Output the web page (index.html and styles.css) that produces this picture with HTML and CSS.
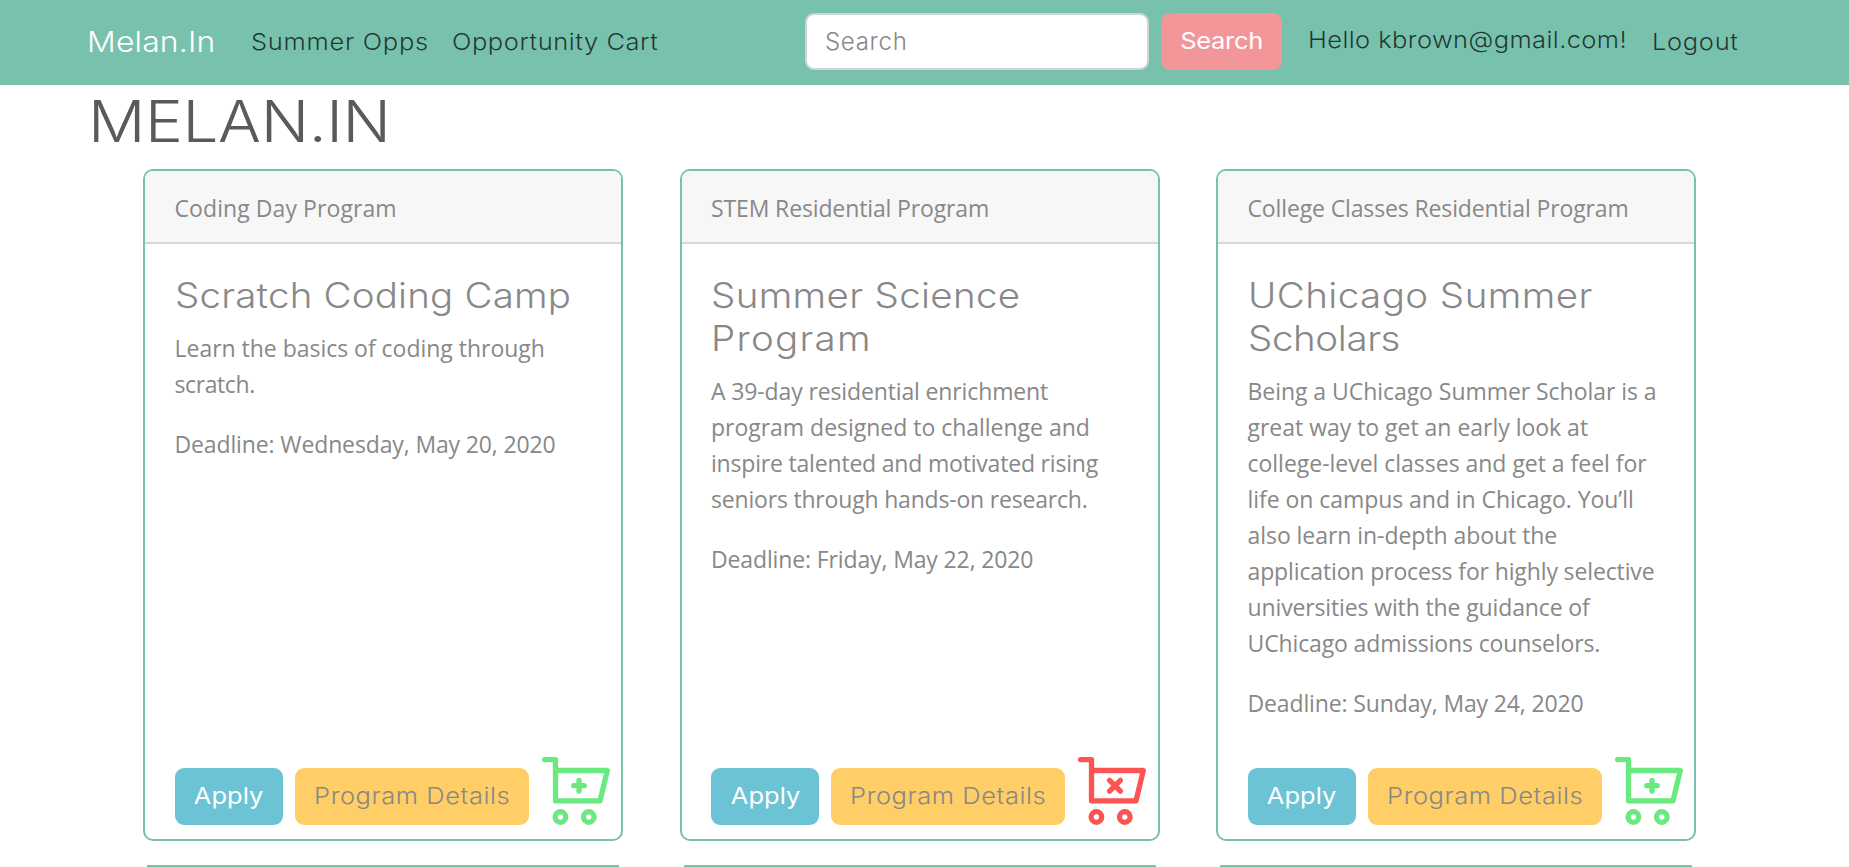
FILE: index.html
```
<!DOCTYPE html>
<html lang="en">
<head>
<meta charset="utf-8">
<title>Melan.In</title>
<link rel="stylesheet" href="styles.css">
</head>
<body>
<svg class="defs" aria-hidden="true">
  <symbol id="cart" viewBox="0 0 70 70">
    <path d="M3.6 3.6H14.5V44.8H59L66.3 14.5H14.5"/>
    <circle cx="19.4" cy="61" r="5.3"/>
    <circle cx="47.8" cy="61" r="5.3"/>
  </symbol>
</svg>
<nav class="navbar">
  <a class="brand"><span class="wide">Melan.In</span></a>
  <a class="link-opps"><span class="wide">Summer Opps</span></a>
  <a class="link-cart"><span class="wide">Opportunity Cart</span></a>
  <form class="search">
    <input class="search-input" type="text" placeholder="Search" aria-label="Search">
    <button class="btn btn-search" type="button"><span class="wide">Search</span></button>
  </form>
  <span class="greeting"><span class="wide">Hello kbrown@gmail.com!</span></span>
  <a class="logout"><span class="wide">Logout</span></a>
</nav>
<h1 class="page-title"><span class="wide">MELAN.IN</span></h1>
<main class="cards">
  <article class="card">
    <header class="card-header loose">Coding Day Program</header>
    <div class="card-body">
      <h4 class="card-title"><span class="wide">Scratch Coding Camp</span></h4>
      <p class="plain">Learn the basics of coding through<br><span class="tight">scratch.</span></p>
      <p>Deadline: Wednesday, May 20, 2020</p>
    </div>
    <footer class="card-actions">
      <button class="btn btn-apply" type="button"><span class="wide">Apply</span></button>
      <button class="btn btn-details" type="button"><span class="wide">Program Details</span></button>
      <svg class="cart cart-add" viewBox="0 0 70 70"><use href="#cart"/><path d="M38 24.4V35M32.7 29.7H43.3"/></svg>
    </footer>
  </article>
  <article class="card">
    <header class="card-header">STEM Residential Program</header>
    <div class="card-body">
      <h4 class="card-title"><span class="wide title-science">Summer Science</span><br><span class="wide title-program">Program</span></h4>
      <p>A 39-day residential enrichment<br><span class="plain">program designed to challenge and</span><br><span class="snug">inspire talented and motivated rising</span><br><span class="snug">seniors through hands-on research.</span></p>
      <p>Deadline: Friday, May 22, 2020</p>
    </div>
    <footer class="card-actions">
      <button class="btn btn-apply" type="button"><span class="wide">Apply</span></button>
      <button class="btn btn-details" type="button"><span class="wide">Program Details</span></button>
      <svg class="cart cart-remove" viewBox="0 0 70 70"><use href="#cart"/><path d="M32.6 24.3L43.4 35.1M43.4 24.3L32.6 35.1"/></svg>
    </footer>
  </article>
  <article class="card">
    <header class="card-header">College Classes Residential Program</header>
    <div class="card-body">
      <h4 class="card-title"><span class="wide title-uchicago">UChicago Summer</span><br><span class="wide title-scholars">Scholars</span></h4>
      <p class="even">Being a UChicago Summer Scholar is a<br><span class="plain">great way to get an early look at<br>college-level classes and get a feel for</span><br>life on campus and in Chicago. You’ll<br>also learn in-depth about the<br><span class="normal">application process for highly selective<br>universities with the guidance of<br>UChicago admissions counselors.</span></p>
      <p>Deadline: Sunday, May 24, 2020</p>
    </div>
    <footer class="card-actions">
      <button class="btn btn-apply" type="button"><span class="wide">Apply</span></button>
      <button class="btn btn-details" type="button"><span class="wide">Program Details</span></button>
      <svg class="cart cart-add" viewBox="0 0 70 70"><use href="#cart"/><path d="M38 24.4V35M32.7 29.7H43.3"/></svg>
    </footer>
  </article>
  <article class="card card-next"></article>
  <article class="card card-next"></article>
  <article class="card card-next"></article>
</main>
</body>
</html>
```

FILE: styles.css
```
* { box-sizing: border-box; }
html, body { height: 867px; overflow: hidden; }
body { margin: 0; background: #fff; color: #888; font: 400 23px/36px "Open Sans", "Noto Sans", sans-serif; white-space: nowrap; }
.defs { display: none; }

/* Stretches Inter to the proportions of a wide geometric face */
.wide { display: inline-block; transform: scaleX(1.1); transform-origin: left center; }

.navbar { display: flex; align-items: center; height: 85px; padding-left: 87px; background: #78c2ad; font-family: Inter, sans-serif; font-weight: 300; font-size: 23.2px; color: rgba(0, 0, 0, .72); }
.brand { width: 164px; padding-bottom: 2px; color: #fff; font-size: 29px; letter-spacing: .15px; }
.link-opps { width: 201px; padding-bottom: 2px; letter-spacing: .65px; }
.link-cart { width: 353px; padding-bottom: 2px; letter-spacing: .5px; }
.search { display: flex; gap: 12px; width: 503px; margin: 0 0 2px; }
.search-input { width: 344px; height: 57px; padding: 0 18px; border: 2px solid #ced4da; border-radius: 9px; background: #fff; font: inherit; font-size: 24px; letter-spacing: .7px; }
.search-input::placeholder { color: #888; opacity: 1; }
.greeting { width: 344px; padding-bottom: 6px; letter-spacing: .35px; }
.logout { padding-bottom: 2px; letter-spacing: .6px; }

.btn { height: 57px; padding: 0 0 1px; border: 0; border-radius: 9px; font: 300 23.2px/36px Inter, sans-serif; text-align: center; }
.btn .wide { transform-origin: center; }
.btn-search { width: 121px; background: #f3969a; color: #fff; font-weight: 400; letter-spacing: -.3px; }
.btn-apply { width: 108px; background: #6cc3d5; color: #fff; font-weight: 400; }
.btn-details { width: 234px; padding-left: 1px; background: #ffce67; color: #888; letter-spacing: .5px; }

.page-title { height: 72px; margin: 0 0 12px 88px; color: #5a5a5a; font: 300 58px/72px Inter, sans-serif; letter-spacing: -.4px; }

.cards { display: grid; grid-template-columns: repeat(3, 480px); grid-template-rows: 672px 2px; gap: 24px 56.5px; padding-left: 143px; }
.card { display: flex; flex-direction: column; border: 2px solid #78c2ad; border-radius: 10px; overflow: hidden; letter-spacing: -.13px; }
/* Only the top edge of the following row is in view */
.card-next { height: 2px; margin: 0 4px; border-width: 2px 0 0; border-radius: 0; }
.card-header { height: 73px; padding: 19px 30px 0 29.5px; border-bottom: 2px solid #d8d8d8; background: #f7f7f7; }
.card-body { flex: 1; padding: 30px 30px 0 29.5px; }
.card-title { margin: 0 0 13px; font: 300 35px/43.2px Inter, sans-serif; letter-spacing: .17px; }
.title-science { letter-spacing: .3px; }
.title-program { letter-spacing: 1.15px; }
.title-uchicago { letter-spacing: .4px; }
.title-scholars { letter-spacing: -.35px; }
p { margin: 0 0 24px; }
.plain { letter-spacing: -.02px; }
.even { letter-spacing: -.05px; }
.normal { letter-spacing: -.13px; }
.snug { letter-spacing: -.19px; }
.tight { letter-spacing: -.4px; }
.loose { letter-spacing: .08px; }

.card-actions { display: flex; align-items: flex-end; gap: 12px; padding: 0 0 14px 29.6px; }
.cart { width: 70px; height: 70px; margin-bottom: -1px; fill: none; stroke-width: 5.3; stroke-linecap: round; stroke-linejoin: round; }
.cart-add { stroke: #6ae981; }
.cart-remove { stroke: #fc5353; }
```
